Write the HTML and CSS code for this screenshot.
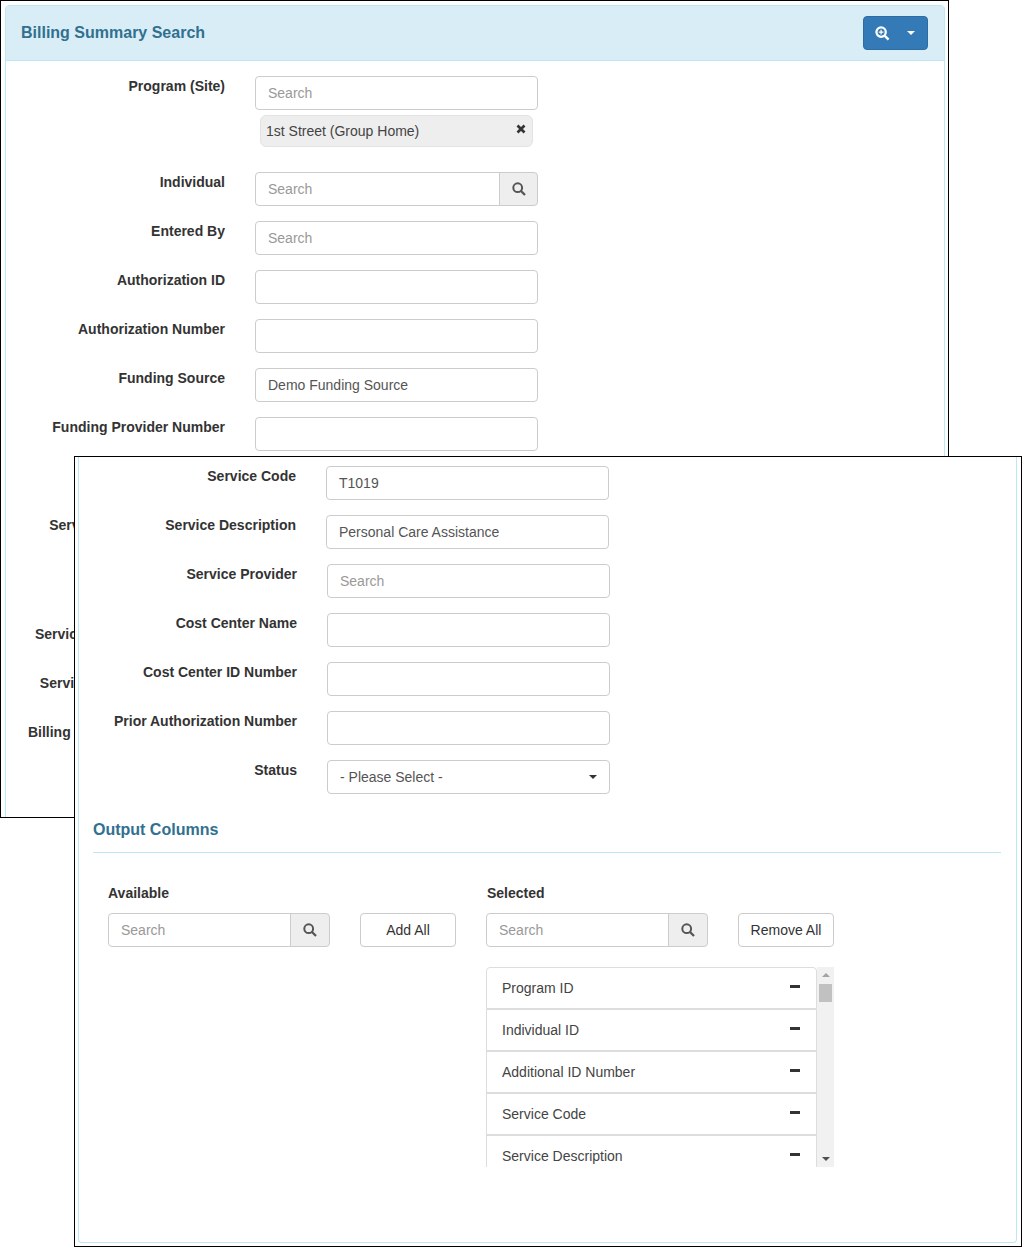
FILE: index.html
```html
<!DOCTYPE html>
<html lang="en">
<head>
<meta charset="utf-8">
<title>Billing Summary Search</title>
<link rel="stylesheet" href="styles.css">
</head>
<body>
<section class="window window-back">
  <div class="panel panel-back">
    <header class="panel-head">
      <h1 class="panel-title">Billing Summary Search</h1>
      <button class="head-btn" type="button">
        <svg class="zoom-icon" viewBox="0 0 16 16" width="15" height="15"><circle cx="6.5" cy="6.5" r="5" fill="none" stroke="#fff" stroke-width="2.4"/><path d="M6.5 4v5M4 6.5h5" stroke="#fff" stroke-width="1.3"/><path d="M10.5 10.5l4 4" stroke="#fff" stroke-width="2.6"/></svg>
        <span class="caret caret-white"></span>
      </button>
    </header>
    <div class="form form-back">
      <div class="row">
        <label class="label">Program (Site)</label>
        <div class="control">
          <input class="field" placeholder="Search">
          <div class="chip"><span>1st Street (Group Home)</span>
            <svg class="chip-x" viewBox="0 0 10 10" width="10" height="10"><path d="M1.5 1.5l7 7M8.5 1.5l-7 7" stroke="#333" stroke-width="2.7"/></svg>
          </div>
        </div>
      </div>
      <div class="row">
        <label class="label">Individual</label>
        <div class="control group">
          <input class="field group-field" placeholder="Search">
          <span class="addon"><svg class="search-icon" viewBox="0 0 14 14" width="14" height="14"><circle cx="5.7" cy="5.7" r="4.4" fill="none" stroke="#555" stroke-width="2"/><path d="M9 9l4 4" stroke="#555" stroke-width="2.3"/></svg></span>
        </div>
      </div>
      <div class="row"><label class="label">Entered By</label><div class="control"><input class="field" placeholder="Search"></div></div>
      <div class="row"><label class="label">Authorization ID</label><div class="control"><input class="field"></div></div>
      <div class="row"><label class="label">Authorization Number</label><div class="control"><input class="field"></div></div>
      <div class="row"><label class="label">Funding Source</label><div class="control"><input class="field" value="Demo Funding Source"></div></div>
      <div class="row"><label class="label">Funding Provider Number</label><div class="control"><input class="field"></div></div>
      <div class="row"><label class="label">Service Code</label><div class="control"><input class="field"></div></div>
      <div class="row row-tall"><label class="label">Service Coordinator Name</label><div class="control"><input class="field"></div></div>
      <div class="row"><label class="label">Service Authorization Status</label><div class="control"><input class="field"></div></div>
      <div class="row"><label class="label">Service Provider ID Number</label><div class="control"><input class="field"></div></div>
      <div class="row"><label class="label">Billing Provider Authorization</label><div class="control"><input class="field"></div></div>
    </div>
  </div>
</section>

<section class="window window-front">
  <div class="panel panel-front">
    <div class="form form-front">
      <div class="shifted">
        <div class="row"><label class="label">Service Code</label><div class="control"><input class="field" value="T1019"></div></div>
        <div class="row"><label class="label">Service Description</label><div class="control"><input class="field" value="Personal Care Assistance"></div></div>
      </div>
      <div class="row"><label class="label">Service Provider</label><div class="control"><input class="field" placeholder="Search"></div></div>
      <div class="row"><label class="label">Cost Center Name</label><div class="control"><input class="field"></div></div>
      <div class="row"><label class="label">Cost Center ID Number</label><div class="control"><input class="field"></div></div>
      <div class="row"><label class="label">Prior Authorization Number</label><div class="control"><input class="field"></div></div>
      <div class="row"><label class="label">Status</label><div class="control"><div class="field select"><span>- Please Select -</span><span class="caret"></span></div></div></div>
    </div>

    <div class="output">
      <h2 class="output-title">Output Columns</h2>
      <div class="columns">
        <div class="column">
          <div class="column-label">Available</div>
          <div class="tools">
            <div class="group picker">
              <input class="field group-field" placeholder="Search">
              <span class="addon"><svg class="search-icon" viewBox="0 0 14 14" width="14" height="14"><circle cx="5.7" cy="5.7" r="4.4" fill="none" stroke="#555" stroke-width="2"/><path d="M9 9l4 4" stroke="#555" stroke-width="2.3"/></svg></span>
            </div>
            <button class="btn" type="button">Add All</button>
          </div>
        </div>
        <div class="column">
          <div class="column-label column-label-selected">Selected</div>
          <div class="tools">
            <div class="group picker">
              <input class="field group-field" placeholder="Search">
              <span class="addon"><svg class="search-icon" viewBox="0 0 14 14" width="14" height="14"><circle cx="5.7" cy="5.7" r="4.4" fill="none" stroke="#555" stroke-width="2"/><path d="M9 9l4 4" stroke="#555" stroke-width="2.3"/></svg></span>
            </div>
            <button class="btn" type="button">Remove All</button>
          </div>
          <div class="list-wrap">
            <ul class="list">
              <li class="item"><span>Program ID</span><i class="minus"></i></li>
              <li class="item"><span>Individual ID</span><i class="minus"></i></li>
              <li class="item"><span>Additional ID Number</span><i class="minus"></i></li>
              <li class="item"><span>Service Code</span><i class="minus"></i></li>
              <li class="item"><span>Service Description</span><i class="minus"></i></li>
            </ul>
            <div class="scrollbar">
              <span class="arrow arrow-up"></span>
              <span class="thumb"></span>
              <span class="arrow arrow-down"></span>
            </div>
          </div>
        </div>
      </div>
    </div>
  </div>
</section>
</body>
</html>
```

FILE: styles.css
```css
* { box-sizing: border-box; }
html, body { margin: 0; padding: 0; }
body {
  position: relative;
  width: 1026px;
  height: 1251px;
  background: #fff;
  color: #333;
  font-family: "Liberation Sans", Arial, sans-serif;
  font-size: 14px;
  line-height: 20px;
  overflow: hidden;
}
.window {
  position: absolute;
  background: #fff;
  border: 1px solid #000;
  overflow: hidden;
}
.window-back { left: 0; top: 0; width: 949px; height: 818px; padding: 4px 3px 0 4px; }
.window-front { left: 74px; top: 456px; width: 948px; height: 791px; padding: 0 4px 3px 3px; }
.panel { border: 1px solid #bce8f1; background: #fff; }
.panel-back { height: 830px; border-radius: 4px 4px 0 0; }
.panel-front { height: 100%; border-top: 0; border-radius: 0 0 4px 4px; }
.panel-head {
  display: flex;
  justify-content: space-between;
  align-items: center;
  height: 55px;
  padding: 0 16px 0 15px;
  background: #d9edf7;
  border-bottom: 1px solid #bce8f1;
}
.panel-title {
  margin: 0;
  font-size: 16px;
  line-height: 20px;
  font-weight: 700;
  color: #31708f;
}
.head-btn {
  display: flex;
  align-items: center;
  justify-content: space-between;
  width: 65px;
  height: 34px;
  padding: 0 12px 0 11px;
  background: #337ab7;
  border: 1px solid #2e6da4;
  border-radius: 4px;
}
.zoom-icon { display: block; }
.caret {
  display: inline-block;
  width: 0;
  height: 0;
  border-top: 4px solid #333;
  border-left: 4px solid transparent;
  border-right: 4px solid transparent;
}
.caret-white { border-top-color: #fff; }
.form-back { padding-top: 15px; }
.form-front { padding-top: 9px; }
.shifted { margin-left: -1px; }
.row { display: flex; column-gap: 30px; margin-bottom: 15px; }
.row-tall { min-height: 94px; }
.label {
  flex: none;
  width: 219px;
  text-align: right;
  font-weight: 700;
  white-space: nowrap;
}
.form-front .label { width: 218px; }
.control { flex: none; width: 283px; }
.field {
  display: block;
  width: 100%;
  height: 34px;
  padding: 6px 12px;
  background: #fff;
  border: 1px solid #ccc;
  border-radius: 4px;
  color: #555;
  font-family: inherit;
  font-size: 14px;
  line-height: 20px;
  outline: 0;
}
.field::placeholder { color: #999; opacity: 1; }
.select { display: flex; align-items: center; justify-content: space-between; padding-right: 12px; }
.chip {
  display: flex;
  justify-content: space-between;
  align-items: flex-start;
  height: 32px;
  margin: 5px 5px 10px;
  padding: 5px 6px 5px 5px;
  background: #eee;
  border: 1px solid #e3e3e3;
  border-radius: 6px;
  color: #444;
}
.chip-x { margin-top: 3px; }
.group { display: flex; }
.group-field { flex: 1; min-width: 0; border-radius: 4px 0 0 4px; }
.addon {
  display: flex;
  flex: none;
  align-items: center;
  justify-content: center;
  width: 39px;
  height: 34px;
  margin-left: -1px;
  background: #eee;
  border: 1px solid #ccc;
  border-radius: 0 4px 4px 0;
}
.picker .addon { width: 40px; }
.output { margin: 0 15px 0 14px; }
.output-title {
  margin: 0;
  padding: 11px 0 13px;
  height: 44px;
  border-bottom: 1px solid #bce8f1;
  font-size: 16px;
  line-height: 20px;
  font-weight: 700;
  color: #31708f;
}
.columns { display: flex; column-gap: 30px; padding: 30px 0 0 15px; }
.column { width: 348px; }
.column-label { height: 20px; margin-bottom: 10px; font-weight: 700; color: #333; }
.column-label-selected { padding-left: 1px; }
.tools { display: flex; column-gap: 30px; }
.picker { width: 222px; }
.btn {
  width: 96px;
  height: 34px;
  padding: 0;
  background: #fff;
  border: 1px solid #ccc;
  border-radius: 4px;
  color: #333;
  font-family: inherit;
  font-size: 14px;
}
.list-wrap { display: flex; height: 200px; margin-top: 20px; overflow: hidden; }
.list { width: 331px; margin: 0; padding: 0; list-style: none; }
.item {
  display: flex;
  align-items: center;
  justify-content: space-between;
  height: 42px;
  padding: 0 16px 0 15px;
  background: #fff;
  border: 1px solid #ddd;
  border-radius: 0;
  color: #444;
}
.item:first-child { border-radius: 4px 4px 0 0; }
.minus { display: block; width: 10px; height: 3px; margin-top: -3px; background: #333; }
.scrollbar {
  position: relative;
  flex: none;
  width: 17px;
  background: #f1f1f1;
}
.thumb { position: absolute; left: 2px; top: 17px; width: 13px; height: 18px; background: #c1c1c1; }
.arrow { position: absolute; left: 5px; width: 0; height: 0; border-left: 4px solid transparent; border-right: 4px solid transparent; }
.arrow-up { top: 6px; border-bottom: 4px solid #a3a3a3; }
.arrow-down { bottom: 6px; border-top: 4px solid #505050; }
```
